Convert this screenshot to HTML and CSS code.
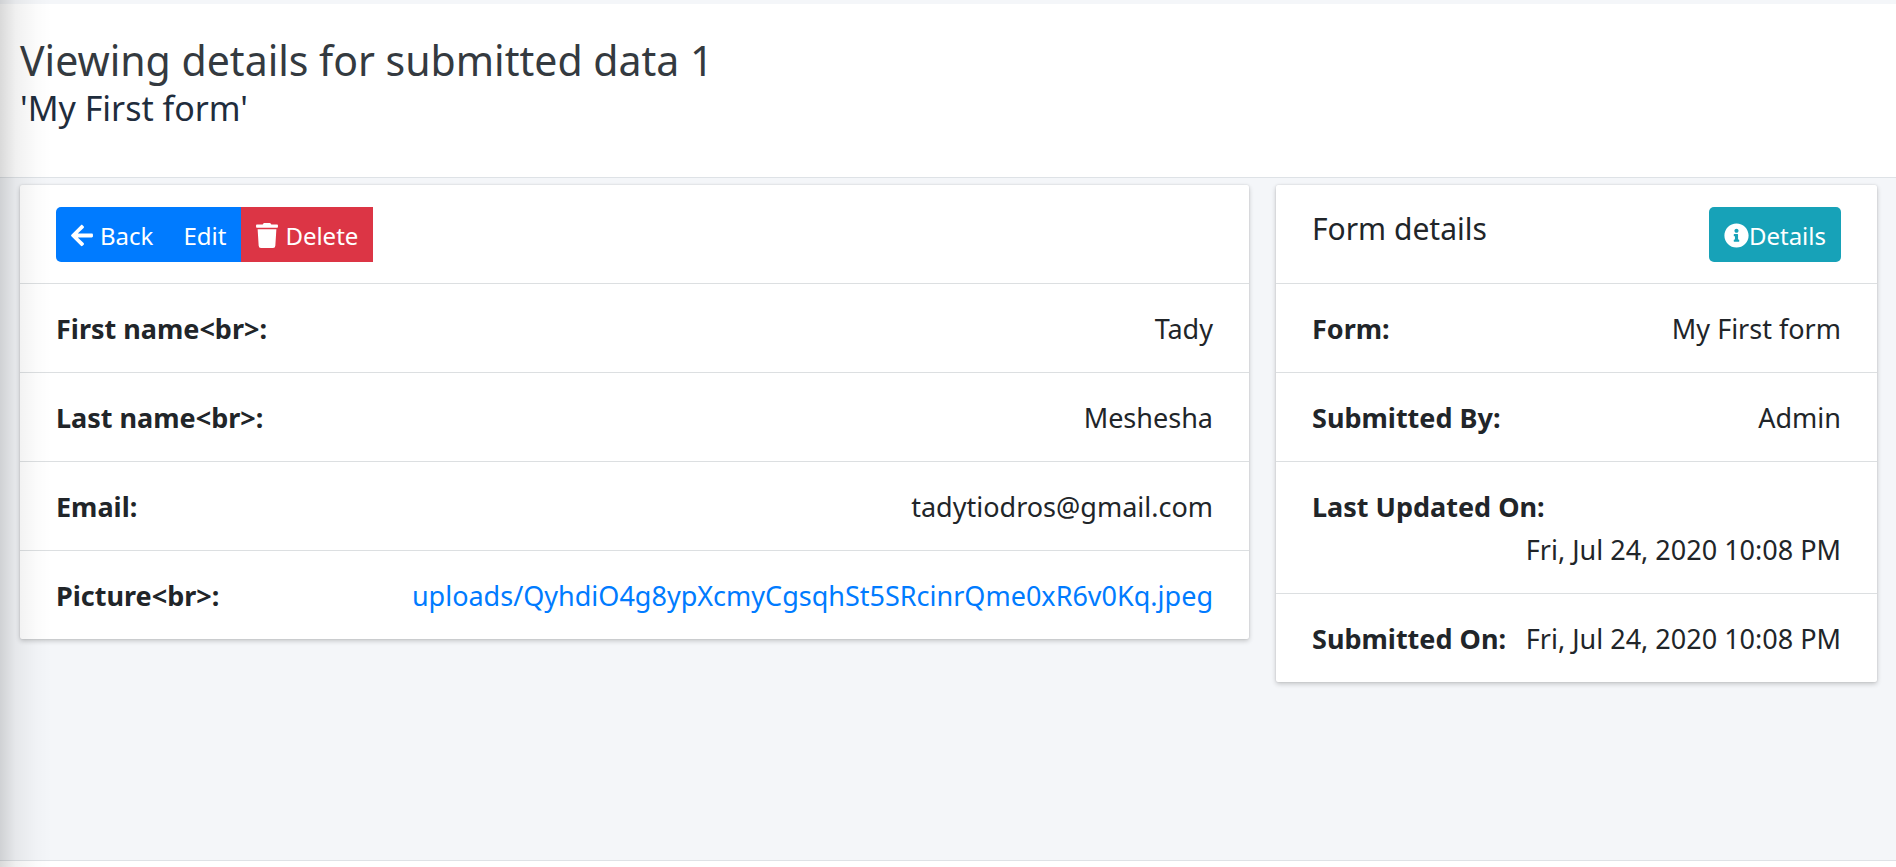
FILE: index.html
```html
<!DOCTYPE html>
<html lang="en">
<head>
<meta charset="utf-8">
<meta name="viewport" content="width=device-width, initial-scale=1">
<title>Submitted data</title>
<link rel="stylesheet" href="styles.css">
</head>
<body>
<div class="page">
  <header class="page-header">
    <h1 class="title">Viewing details for submitted data 1</h1>
    <p class="subtitle">'My First form'</p>
  </header>
  <main class="content">
    <section class="card">
      <div class="card-header">
        <div class="btn-group">
          <a class="btn btn-primary" href="#back"><svg class="icon" viewBox="0 0 448 512" aria-hidden="true"><path d="M257.5 445.1l-22.2 22.2c-9.4 9.4-24.6 9.4-33.9 0L7 273c-9.4-9.4-9.4-24.6 0-33.9L201.4 44.7c9.4-9.4 24.6-9.4 33.9 0l22.2 22.2c9.5 9.5 9.3 25-.4 34.3L136.6 216H424c13.3 0 24 10.7 24 24v32c0 13.3-10.7 24-24 24H136.6l120.5 114.8c9.8 9.3 10 24.8.4 34.3z"/></svg>Back</a>
          <a class="btn btn-primary" href="#edit">Edit</a>
          <button class="btn btn-danger" type="button"><svg class="icon" viewBox="0 0 448 512" aria-hidden="true"><path d="M432 32H312l-9.4-18.7A24 24 0 0 0 281.1 0H166.8a23.72 23.72 0 0 0-21.4 13.3L136 32H16A16 16 0 0 0 0 48v32a16 16 0 0 0 16 16h416a16 16 0 0 0 16-16V48a16 16 0 0 0-16-16zM53.2 467a48 48 0 0 0 47.9 45h245.8a48 48 0 0 0 47.9-45L416 128H32z"/></svg>Delete</button>
        </div>
      </div>
      <dl class="list">
        <div class="item"><dt>First name&lt;br&gt;:</dt><dd>Tady</dd></div>
        <div class="item"><dt>Last name&lt;br&gt;:</dt><dd>Meshesha</dd></div>
        <div class="item"><dt>Email:</dt><dd>tadytiodros@gmail.com</dd></div>
        <div class="item"><dt>Picture&lt;br&gt;:</dt><dd><a class="link" href="#picture">uploads/QyhdiO4g8ypXcmyCgsqhSt5SRcinrQme0xR6v0Kq.jpeg</a></dd></div>
      </dl>
    </section>
    <section class="card">
      <div class="card-header">
        <h2 class="card-title">Form details</h2>
        <a class="btn btn-info" href="#details"><svg class="icon icon-round" viewBox="0 0 512 512" aria-hidden="true"><path d="M256 8C119.043 8 8 119.083 8 256c0 136.997 111.043 248 248 248s248-111.003 248-248C504 119.083 392.957 8 256 8zm0 110c23.196 0 42 18.804 42 42s-18.804 42-42 42-42-18.804-42-42 18.804-42 42-42zm56 254c0 6.627-5.373 12-12 12h-88c-6.627 0-12-5.373-12-12v-24c0-6.627 5.373-12 12-12h12v-64h-12c-6.627 0-12-5.373-12-12v-24c0-6.627 5.373-12 12-12h64c6.627 0 12 5.373 12 12v100h12c6.627 0 12 5.373 12 12v24z"/></svg>Details</a>
      </div>
      <dl class="list">
        <div class="item"><dt>Form:</dt><dd>My First form</dd></div>
        <div class="item"><dt>Submitted By:</dt><dd>Admin</dd></div>
        <div class="item"><dt>Last Updated On:</dt><dd>Fri, Jul 24, 2020 10:08 PM</dd></div>
        <div class="item"><dt>Submitted On:</dt><dd>Fri, Jul 24, 2020 10:08 PM</dd></div>
      </dl>
    </section>
  </main>
  <footer class="page-footer"></footer>
  <div class="edge-shadow"></div>
</div>
</body>
</html>
```
FILE: styles.css
```css
* { box-sizing: border-box; }

body {
  margin: 0;
  background: #f4f6f9;
  color: #212529;
  font-family: "Segoe UI", "Noto Sans", "Open Sans", sans-serif;
  font-size: 27px;
  line-height: 43px;
}

h1, h2, p, dl, dt, dd { margin: 0; }

.page {
  position: relative;
  display: flex;
  flex-direction: column;
  min-height: 100vh;
  padding-top: 4px;
}

.page-header {
  padding: 29px 20px 47px;
  background: #fff;
  border-bottom: 1px solid #dee2e6;
}

.title {
  color: #343a40;
  font-size: 41px;
  font-weight: 400;
  line-height: 54px;
}

.subtitle {
  color: #1f2d3d;
  font-size: 34px;
}

.content {
  flex: 1;
  display: grid;
  grid-template-columns: 1229fr 601fr;
  gap: 27px;
  align-items: start;
  padding: 7px 19px 27px 20px;
}

.card {
  background: #fff;
  border-radius: 2px;
  box-shadow: 0 0 2px rgba(0, 0, 0, .13), 0 2px 5px rgba(0, 0, 0, .2);
}

.card-header {
  display: flex;
  justify-content: space-between;
  align-items: flex-start;
  padding: 22px 36px 21px;
}

.card-title {
  font-size: 30px;
  font-weight: 400;
}

.btn-group {
  display: flex;
  border-radius: 5px 0 0 5px;
  overflow: hidden;
}

.btn {
  display: flex;
  align-items: center;
  height: 55px;
  padding: 2px 15px 0;
  border: 0;
  color: #fff;
  font: inherit;
  font-size: 24px;
  text-decoration: none;
}

.btn-primary { background: #007bff; }
.btn-danger { background: #dc3545; }
.btn-info { background: #17a2b8; border-radius: 5px; }

.icon {
  width: 22px;
  height: 25px;
  margin-right: 7px;
  fill: currentColor;
}

.icon-round {
  width: 25px;
  margin-right: 0;
}

.item {
  display: flex;
  flex-wrap: wrap;
  padding: 23px 36px 22px;
  border-top: 1px solid #dcdfe1;
}

dt { font-weight: 700; }
dd { margin-left: auto; }

.link {
  color: #007bff;
  text-decoration: none;
}

.page-footer {
  height: 7px;
  background: #fff;
  border-top: 1px solid #dee2e6;
}

.edge-shadow {
  position: absolute;
  top: 0;
  bottom: 0;
  left: 0;
  width: 52px;
  background: linear-gradient(to right, rgba(0, 0, 0, .15), rgba(0, 0, 0, .06) 30%, rgba(0, 0, 0, .015) 70%, transparent);
  pointer-events: none;
}
```
